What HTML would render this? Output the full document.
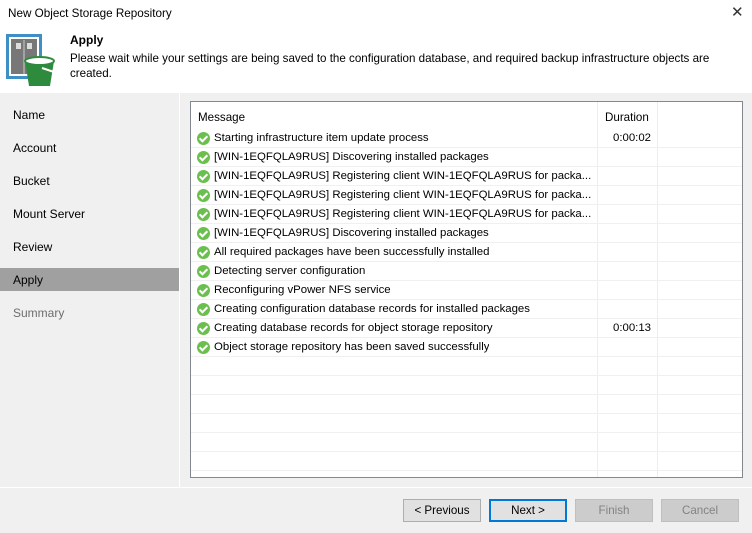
<!DOCTYPE html>
<html><head><style>
*{margin:0;padding:0;box-sizing:border-box}
body{width:752px;height:533px;background:#f0f0f0;font-family:"Liberation Sans",sans-serif;font-size:12px;color:#000;position:relative;overflow:hidden}
.a{position:absolute}
.hdr{left:0;top:0;width:752px;height:93px;background:#fff}
.nav div{position:absolute;left:13px;font-size:12px}
.tbl{left:190px;top:101px;width:553px;height:377px;background:#fff;border:1px solid #828790;overflow:hidden}
.row{position:absolute;left:0;width:551px;height:19px;border-bottom:1px solid #f0f0f0}
.row span{position:absolute;left:23px;top:3px;white-space:nowrap;font-size:11.4px;max-width:383px;overflow:hidden}
.row i{position:absolute;left:6px;top:3px;width:13px;height:13px;border-radius:50%;background:#6bbf4e}
.row i:after{content:"";position:absolute;left:4px;top:2px;width:3px;height:6px;border:solid #fff;border-width:0 2px 2px 0;transform:rotate(45deg)}
.row b{position:absolute;left:422px;top:3px;font-weight:normal;font-size:11.4px}
.btn{position:absolute;top:499px;width:78px;height:23px;border:1px solid #adadad;background:#e1e1e1;text-align:center;line-height:21px;font-size:11.6px}
</style></head><body>
<div class="a hdr"></div>
<div class="a" style="left:8px;top:7px;font-size:11.7px">New Object Storage Repository</div>
<div class="a" style="left:731px;top:3px;font-size:15px;color:#333">✕</div>
<svg class="a" style="left:6px;top:34px" width="52" height="54">
<rect x="1.5" y="1.5" width="33" height="42" fill="none" stroke="#3d8fc4" stroke-width="3"/>
<rect x="5" y="5" width="26" height="35" fill="#777"/>
<rect x="10" y="9" width="5" height="6" fill="#ddd"/><rect x="21" y="9" width="5" height="6" fill="#ddd"/>
<line x1="18" y1="6" x2="18" y2="40" stroke="#ccc" stroke-width="1"/>
<path d="M19 27 L23 52 L44 52 L48 27 Z" fill="#2e8b3e"/>
<ellipse cx="33.5" cy="27" rx="14.5" ry="4" fill="#fff" stroke="#2e8b3e" stroke-width="2"/>
<path d="M36 34 L48 38" stroke="#fff" stroke-width="2" fill="none"/>
</svg>
<div class="a" style="left:70px;top:33px;font-weight:bold;font-size:12px">Apply</div>
<div class="a" style="left:70px;top:51px;width:670px;line-height:15px;font-size:11.6px">Please wait while your settings are being saved to the configuration database, and required backup infrastructure objects are created.</div>
<div class="a" style="left:179px;top:93px;width:1px;height:395px;background:#fff"></div>
<div class="a" style="left:0;top:268px;width:179px;height:23px;background:#a0a0a0"></div>
<div class="nav">
<div style="top:108px">Name</div><div style="top:141px">Account</div><div style="top:174px">Bucket</div>
<div style="top:207px">Mount Server</div><div style="top:240px">Review</div><div style="top:273px">Apply</div>
<div style="top:306px;color:#6d6d6d">Summary</div></div>
<div class="a tbl">
<div class="a" style="left:406px;top:0;width:1px;height:377px;background:#e8eef8"></div>
<div class="a" style="left:466px;top:0;width:1px;height:377px;background:#e8eef8"></div>
<div class="a" style="left:7px;top:9px;font-size:11.6px">Message</div>
<div class="a" style="left:414px;top:9px;font-size:11.6px">Duration</div>
<div class="row" style="top:27px"><i></i><span>Starting infrastructure item update process</span><b>0:00:02</b></div>
<div class="row" style="top:46px"><i></i><span>[WIN-1EQFQLA9RUS] Discovering installed packages</span></div>
<div class="row" style="top:65px"><i></i><span>[WIN-1EQFQLA9RUS] Registering client WIN-1EQFQLA9RUS for packa...</span></div>
<div class="row" style="top:84px"><i></i><span>[WIN-1EQFQLA9RUS] Registering client WIN-1EQFQLA9RUS for packa...</span></div>
<div class="row" style="top:103px"><i></i><span>[WIN-1EQFQLA9RUS] Registering client WIN-1EQFQLA9RUS for packa...</span></div>
<div class="row" style="top:122px"><i></i><span>[WIN-1EQFQLA9RUS] Discovering installed packages</span></div>
<div class="row" style="top:141px"><i></i><span>All required packages have been successfully installed</span></div>
<div class="row" style="top:160px"><i></i><span>Detecting server configuration</span></div>
<div class="row" style="top:179px"><i></i><span>Reconfiguring vPower NFS service</span></div>
<div class="row" style="top:198px"><i></i><span>Creating configuration database records for installed packages</span></div>
<div class="row" style="top:217px"><i></i><span>Creating database records for object storage repository</span><b>0:00:13</b></div>
<div class="row" style="top:236px"><i></i><span>Object storage repository has been saved successfully</span></div>
<div class="row" style="top:255px"></div><div class="row" style="top:274px"></div><div class="row" style="top:293px"></div>
<div class="row" style="top:312px"></div><div class="row" style="top:331px"></div><div class="row" style="top:350px"></div>
</div>
<div class="a" style="left:0;top:487px;width:752px;height:1px;background:#fff"></div>
<div class="btn" style="left:403px">&lt; Previous</div>
<div class="btn" style="left:489px;border:2px solid #0078d7;line-height:19px">Next &gt;</div>
<div class="btn" style="left:575px;background:#ccc;border-color:#bfbfbf;color:#838383">Finish</div>
<div class="btn" style="left:661px;background:#ccc;border-color:#bfbfbf;color:#838383">Cancel</div>
</body></html>
